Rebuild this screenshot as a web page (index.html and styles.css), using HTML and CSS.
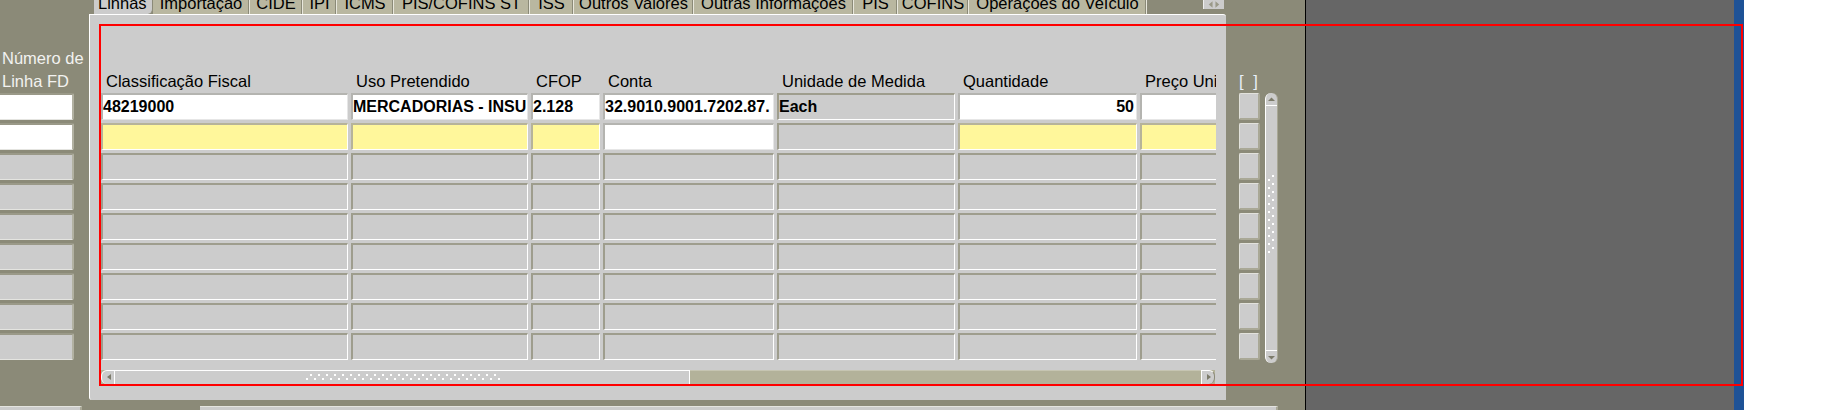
FILE: index.html
```html
<!DOCTYPE html>
<html lang="pt">
<head>
<meta charset="utf-8">
<title>Linhas</title>
<link rel="stylesheet" href="styles.css">
</head>
<body>
<div class="app">
  <div class="workarea">
    <div class="top">
      <div class="leftcol">
        <div class="left-label">Número de<br>Linha FD</div>
        <div class="lfield white"></div>
        <div class="lfield white"></div>
        <div class="lfield"></div>
        <div class="lfield"></div>
        <div class="lfield"></div>
        <div class="lfield"></div>
        <div class="lfield"></div>
        <div class="lfield"></div>
        <div class="lfield"></div>
      </div>
      <div class="tabbed">
        <div class="tabstrip">
          <div class="tab selected t1"><span>Linhas</span></div>
          <div class="tab t2"><span>Importação</span></div>
          <div class="tab t3"><span>CIDE</span></div>
          <div class="tab t4"><span>IPI</span></div>
          <div class="tab t5"><span>ICMS</span></div>
          <div class="tab t6"><span>PIS/COFINS ST</span></div>
          <div class="tab t7"><span>ISS</span></div>
          <div class="tab t8"><span>Outros Valores</span></div>
          <div class="tab t9"><span>Outras Informações</span></div>
          <div class="tab t10"><span>PIS</span></div>
          <div class="tab t11"><span>COFINS</span></div>
          <div class="tab t12"><span>Operações do Veículo</span></div>
          <div class="tabnav">
            <svg width="21" height="9" viewBox="0 0 21 9"><path d="M9 1 L5 4.5 L9 8 Z" fill="#9a9988"/><path d="M12 1 L16 4.5 L12 8 Z" fill="#9a9988"/></svg>
          </div>
        </div>
        <div class="panel">
          <div class="viewport">
            <div class="headers">
              <div class="hd c1">Classificação Fiscal</div>
              <div class="hd c2">Uso Pretendido</div>
              <div class="hd c3">CFOP</div>
              <div class="hd c4">Conta</div>
              <div class="hd c5">Unidade de Medida</div>
              <div class="hd c6">Quantidade</div>
              <div class="hd c7">Preço Uni</div>
            </div>
            <div class="row">
              <div class="cell c1 white">48219000</div>
              <div class="cell c2 white">MERCADORIAS - INSU</div>
              <div class="cell c3 white">2.128</div>
              <div class="cell c4 white">32.9010.9001.7202.87.</div>
              <div class="cell c5">Each</div>
              <div class="cell c6 white num">50</div>
              <div class="cell c7 white"></div>
            </div>
            <div class="row">
              <div class="cell c1 yellow"></div>
              <div class="cell c2 yellow"></div>
              <div class="cell c3 yellow"></div>
              <div class="cell c4 white"></div>
              <div class="cell c5"></div>
              <div class="cell c6 yellow"></div>
              <div class="cell c7 yellow"></div>
            </div>
            <div class="row"><div class="cell c1"></div><div class="cell c2"></div><div class="cell c3"></div><div class="cell c4"></div><div class="cell c5"></div><div class="cell c6"></div><div class="cell c7"></div></div>
            <div class="row"><div class="cell c1"></div><div class="cell c2"></div><div class="cell c3"></div><div class="cell c4"></div><div class="cell c5"></div><div class="cell c6"></div><div class="cell c7"></div></div>
            <div class="row"><div class="cell c1"></div><div class="cell c2"></div><div class="cell c3"></div><div class="cell c4"></div><div class="cell c5"></div><div class="cell c6"></div><div class="cell c7"></div></div>
            <div class="row"><div class="cell c1"></div><div class="cell c2"></div><div class="cell c3"></div><div class="cell c4"></div><div class="cell c5"></div><div class="cell c6"></div><div class="cell c7"></div></div>
            <div class="row"><div class="cell c1"></div><div class="cell c2"></div><div class="cell c3"></div><div class="cell c4"></div><div class="cell c5"></div><div class="cell c6"></div><div class="cell c7"></div></div>
            <div class="row"><div class="cell c1"></div><div class="cell c2"></div><div class="cell c3"></div><div class="cell c4"></div><div class="cell c5"></div><div class="cell c6"></div><div class="cell c7"></div></div>
            <div class="row"><div class="cell c1"></div><div class="cell c2"></div><div class="cell c3"></div><div class="cell c4"></div><div class="cell c5"></div><div class="cell c6"></div><div class="cell c7"></div></div>
          </div>
          <div class="hscroll">
            <div class="sbtn left">
              <svg width="14" height="14" viewBox="0 0 14 14"><path d="M9 4 L5 7 L9 10 Z" fill="#7c7b6a"/></svg>
            </div>
            <div class="hthumb"><div class="hgrip"></div></div>
            <div class="htrack"></div>
            <div class="sbtn right">
              <svg width="14" height="14" viewBox="0 0 14 14"><path d="M5 4 L9 7 L5 10 Z" fill="#7c7b6a"/></svg>
            </div>
          </div>
        </div>
      </div>
      <div class="rightcol">
        <div class="indicators">
          <div class="ind-head">[ ]</div>
          <div class="ind"></div>
          <div class="ind"></div>
          <div class="ind"></div>
          <div class="ind"></div>
          <div class="ind"></div>
          <div class="ind"></div>
          <div class="ind"></div>
          <div class="ind"></div>
          <div class="ind"></div>
        </div>
        <div class="vscroll">
          <div class="vbtn up">
            <svg width="13" height="13" viewBox="0 0 13 13"><path d="M3 8 L6.5 4.5 L10 8 Z" fill="#7c7b6a"/></svg>
          </div>
          <div class="vthumb"><div class="vgrip"></div></div>
          <div class="vbtn down">
            <svg width="13" height="13" viewBox="0 0 13 13"><path d="M3 5 L6.5 8.5 L10 5 Z" fill="#7c7b6a"/></svg>
          </div>
        </div>
      </div>
    </div>
    <div class="bottom">
      <div class="bfield first"></div>
      <div class="bfield second"></div>
    </div>
  </div>
  <div class="divider"></div>
  <div class="dark"></div>
  <div class="blue"></div>
  <div class="blank"></div>
</div>
<div class="annotation"></div>
</body>
</html>
```

FILE: styles.css
```css
* { box-sizing: border-box; }

html, body {
  margin: 0;
  padding: 0;
}

body {
  width: 1844px;
  height: 410px;
  overflow: hidden;
  font-family: "Liberation Sans", Arial, sans-serif;
  font-size: 16.5px;
  color: #000;
  background: #ffffff;
  position: relative;
}

.app {
  display: flex;
  height: 410px;
}

.workarea {
  width: 1305px;
  display: flex;
  flex-direction: column;
  background: #8b8a78;
}

.top {
  height: 400px;
  display: flex;
}

/* left column */
.leftcol {
  width: 89px;
  padding-top: 47px;
  display: flex;
  flex-direction: column;
}

.left-label {
  height: 46px;
  line-height: 23px;
  padding-left: 2px;
  color: #f2f2f0;
  white-space: nowrap;
}

.lfield {
  width: 74px;
  height: 27px;
  margin-bottom: 3px;
  background: #cccccc;
  border-top: 2px solid #9a9988;
  border-right: 2px solid #b2b1a2;
  border-bottom: 1px solid #e4e4e0;
  border-radius: 0 2px 2px 0;
}

.lfield.white { background: #ffffff; }

/* tabbed area */
.tabbed {
  width: 1137px;
  display: flex;
  flex-direction: column;
}

.tabstrip {
  height: 14px;
  display: flex;
  padding-left: 5px;
}

.tab {
  flex-shrink: 0;
  height: 14px;
  overflow: hidden;
  background: #b9b7a0;
  border-right: 1px solid #e8e7dc;
  box-shadow: inset -1px 0 0 #8b8a78;
  white-space: nowrap;
  text-align: center;
}

.tab span {
  display: block;
  line-height: 16px;
  margin-top: -5px;
}

.tab.selected {
  background: #cccccc;
  text-align: left;
  padding-left: 4px;
  border-right: 1px solid #8b8a78;
  border-radius: 0 0 5px 0;
  box-shadow: none;
}

.t1 { width: 59px; }
.t2 { width: 97px; }
.t3 { width: 53px; }
.t4 { width: 34px; }
.t5 { width: 57px; }
.t6 { width: 136px; }
.t7 { width: 44px; }
.t8 { width: 120px; }
.t9 { width: 160px; }
.t10 { width: 44px; }
.t11 { width: 71px; }
.t12 { width: 178px; }

.tabnav {
  margin-left: auto;
  margin-right: 2px;
  width: 21px;
  height: 9px;
  background: #cccccc;
  border-left: 1px solid #eeeeee;
  display: flex;
}

.tabnav svg { display: block; }

.panel {
  flex: 1;
  background: #cccccc;
  border-left: 1px solid #ffffff;
  border-top: 1px solid #ffffff;
  border-top-right-radius: 3px;
  border-bottom-left-radius: 3px;
  padding: 57px 0 0 11px;
}

.viewport {
  width: 1115px;
  height: 288px;
  overflow: hidden;
}

.headers {
  display: flex;
  height: 21px;
  line-height: 19px;
  white-space: nowrap;
}

.hd {
  padding-left: 5px;
  margin-right: 3px;
  overflow: hidden;
  flex-shrink: 0;
}

.row {
  display: flex;
  height: 27px;
  margin-bottom: 3px;
}

.cell {
  flex-shrink: 0;
  height: 27px;
  margin-right: 3px;
  background: #cccccc;
  border-top: 2px solid #9e9d8d;
  border-left: 2px solid #9e9d8d;
  border-right: 1px solid #ffffff;
  border-bottom: 1px solid #ffffff;
  font-size: 16px;
  font-weight: bold;
  line-height: 23px;
  white-space: nowrap;
  overflow: hidden;
}

.cell.white { background: #ffffff; border-top-color: #b4b4b0; border-left-color: #b4b4b0; border-right-color: #e6e6e6; border-bottom-color: #e6e6e6; }
.cell.yellow { background: #fff79b; border-top-color: #b6b39a; border-left-color: #b6b39a; }
.cell.num { text-align: right; padding-right: 2px; }

.c1 { width: 247px; }
.c2 { width: 177px; }
.c3 { width: 69px; }
.c4 { width: 171px; }
.c5 { width: 178px; }
.c6 { width: 179px; }
.c7 { width: 179px; }

/* horizontal scrollbar */
.hscroll {
  margin-top: 10px;
  width: 1114px;
  height: 14px;
  display: flex;
  background: #b3b29a;
}

.sbtn {
  width: 14px;
  height: 14px;
  background: #cccccc;
  border-top: 1px solid #ffffff;
}

.sbtn svg { display: block; margin-top: -1px; }

.sbtn.left {
  border-left: 1px solid #ffffff;
  border-radius: 6px 0 0 6px;
  border-right: 1px solid #ffffff;
}

.sbtn.right {
  border-right: 1px solid #8b8a78;
  border-left: 1px solid #ffffff;
  border-radius: 0 6px 6px 0;
}

.hthumb {
  width: 575px;
  height: 14px;
  background: #cccccc;
  border-top: 1px solid #ffffff;
  border-right: 1px solid #ffffff;
  padding: 3px 0 0 191px;
}

.hgrip {
  width: 194px;
  height: 7px;
  background-image:
    linear-gradient(90deg, #ffffff 2px, transparent 2px),
    linear-gradient(90deg, #ffffff 2px, transparent 2px);
  background-size: 8px 2px, 8px 2px;
  background-position: 4px 0, 0 4px;
  background-repeat: repeat-x;
}

.htrack {
  flex: 1;
  border-top: 1px solid #c6c5b2;
}

/* right column */
.rightcol {
  width: 79px;
  padding: 72px 0 0 13px;
  display: flex;
}

.indicators {
  width: 21px;
  display: flex;
  flex-direction: column;
}

.ind-head {
  height: 21px;
  line-height: 19px;
  color: #e9f0f8;
  white-space: nowrap;
  word-spacing: 5px;
}

.ind {
  height: 27px;
  margin-bottom: 3px;
  background: #cccccc;
  border-top: 1px solid #e2e2dc;
  border-left: 1px solid #e2e2dc;
  border-right: 2px solid #a9a896;
  border-bottom: 2px solid #a9a896;
  border-radius: 2px;
}

.vscroll {
  margin: 21px 0 0 5px;
  width: 13px;
  height: 270px;
  display: flex;
  flex-direction: column;
  background: #cccccc;
  border-left: 1px solid #ffffff;
  border-right: 1px solid #a9a896;
  border-radius: 6px;
}

.vbtn {
  height: 13px;
  flex-shrink: 0;
}

.vbtn svg { display: block; margin-left: -1px; }

.vbtn.up { border-bottom: 1px solid #ffffff; }
.vbtn.down { border-top: 1px solid #ffffff; }

.vthumb {
  flex: 1;
  padding: 69px 0 0 2px;
}

.vgrip {
  width: 7px;
  height: 78px;
  background-image:
    linear-gradient(#ffffff 2px, transparent 2px),
    linear-gradient(#ffffff 2px, transparent 2px);
  background-size: 2px 8px, 2px 8px;
  background-position: 0 4px, 4px 0;
  background-repeat: repeat-y;
}

/* bottom row */
.bottom {
  height: 10px;
  padding-top: 6px;
  display: flex;
}

.bfield {
  height: 4px;
  background: #cccccc;
  border-top: 1px solid #e4e4e0;
}

.bfield.first {
  width: 82px;
  border-right: 2px solid #a9a896;
}

.bfield.second {
  margin-left: 118px;
  width: 1078px;
  border-right: 2px solid #a9a896;
}

.divider {
  width: 1px;
  background: #000000;
}

.dark {
  width: 428px;
  background: #666666;
}

.blue {
  width: 10px;
  background: #1e5296;
}

.blank {
  flex: 1;
  background: #ffffff;
}

/* red annotation frame overlaying the screenshot */
.annotation {
  position: absolute;
  left: 99px;
  top: 24px;
  width: 1644px;
  height: 362px;
  border: 2px solid #ff0000;
  pointer-events: none;
}
```
